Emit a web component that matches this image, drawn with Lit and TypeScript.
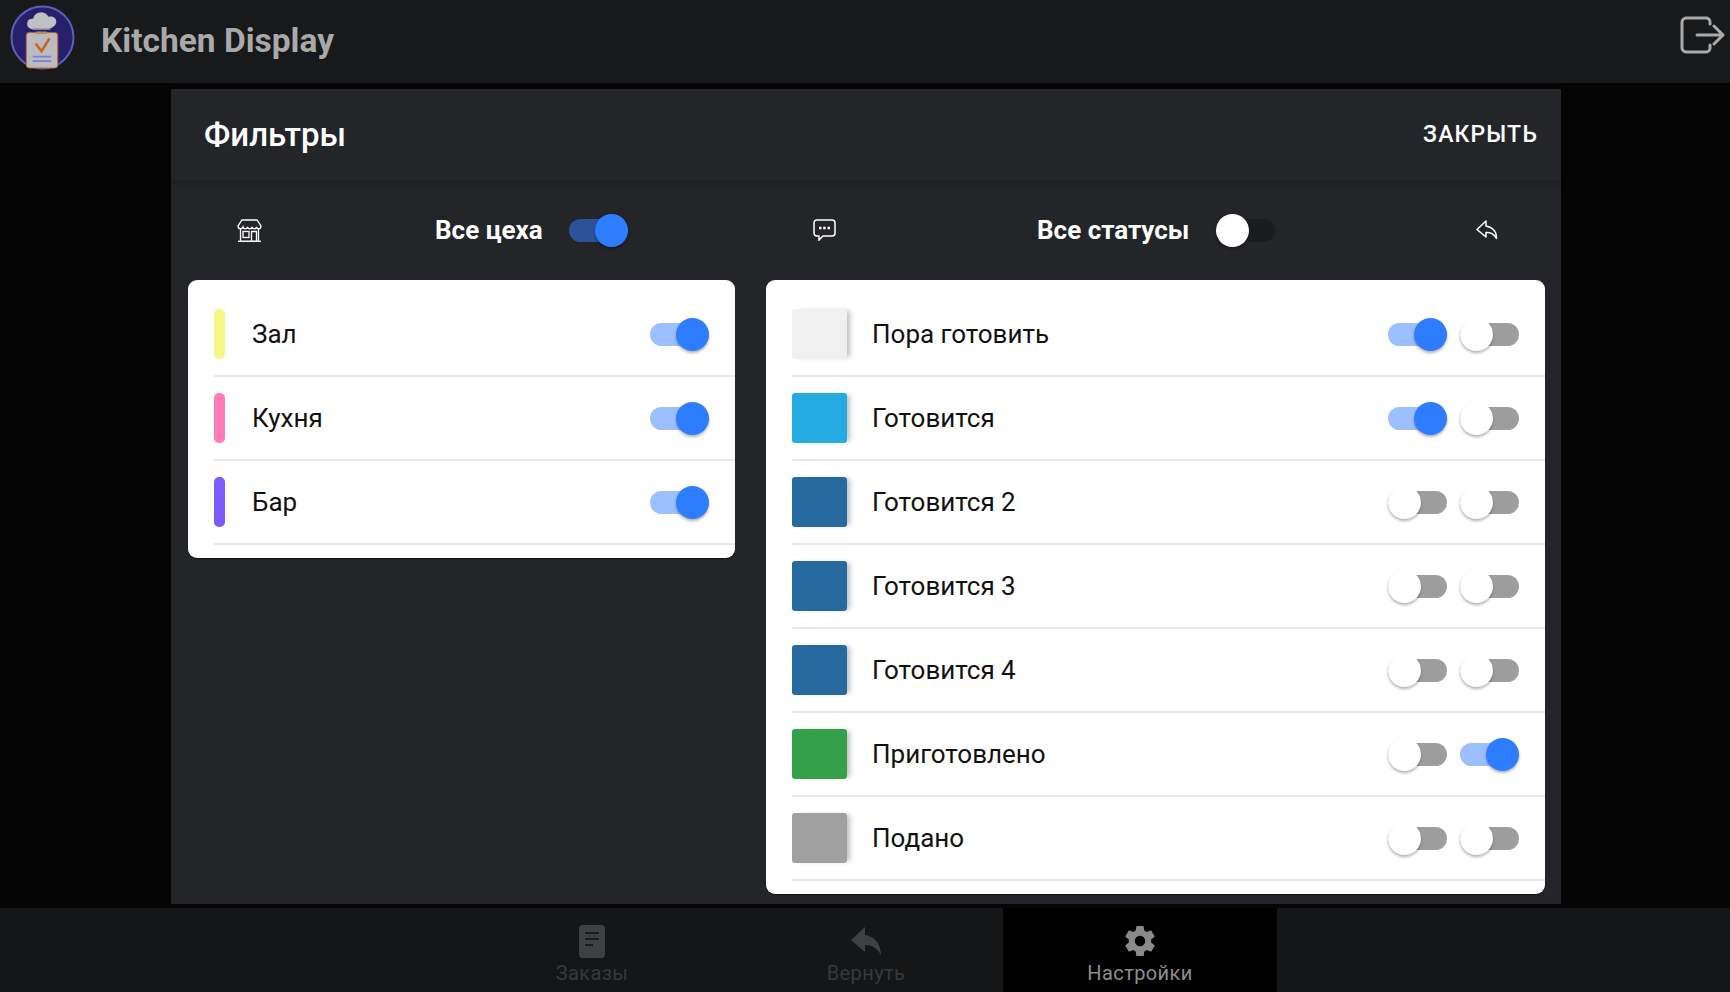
import { LitElement, html, css, svg } from 'lit';
import { customElement, property } from 'lit/decorators.js';
import { classMap } from 'lit/directives/class-map.js';

@customElement('filter-toggle')
export class FilterToggle extends LitElement {
  @property({ type: Boolean }) on = false;
  @property({ type: Boolean }) dark = false;

  static styles = css`
    :host {
      display: block;
      flex: none;
    }
    .switch {
      position: relative;
      width: 59px;
      height: 33px;
      display: flex;
      align-items: center;
    }
    .track {
      width: 100%;
      height: 23px;
      border-radius: 12px;
      background: #9e9e9e;
    }
    .knob {
      position: absolute;
      top: 0;
      left: 0;
      width: 33px;
      height: 33px;
      border-radius: 50%;
      background: #fff;
      box-shadow: 0 2px 3px rgba(0, 0, 0, 0.3);
    }
    .on .track {
      background: #9cbfff;
    }
    .on .knob {
      left: auto;
      right: 0;
      background: #2f7dff;
    }
    .dark .track {
      background: #1b1c1f;
    }
    .dark.on .track {
      background: #2e5299;
    }
  `;

  render() {
    return html`<div class=${classMap({ switch: true, on: this.on, dark: this.dark })}>
      <div class="track"></div>
      <div class="knob"></div>
    </div>`;
  }
}

const workshops = [
  { name: 'Зал', color: '#f4f786', on: true },
  { name: 'Кухня', color: '#ff7ab8', on: true },
  { name: 'Бар', color: '#7c5cff', on: true },
];

const statuses = [
  { name: 'Пора готовить', color: '#f0f0f0', a: true, b: false },
  { name: 'Готовится', color: '#25aae1', a: true, b: false },
  { name: 'Готовится 2', color: '#266a9f', a: false, b: false },
  { name: 'Готовится 3', color: '#266a9f', a: false, b: false },
  { name: 'Готовится 4', color: '#266a9f', a: false, b: false },
  { name: 'Приготовлено', color: '#34a04a', a: false, b: true },
  { name: 'Подано', color: '#a0a0a0', a: false, b: false },
];

const logo = svg`<svg class="logo" width="65" height="65" viewBox="0 0 66 66">
  <circle cx="33" cy="33" r="31.500" fill="#271f6b" stroke="#5a60b8" stroke-width="2"/>
  <path d="M24 25c-5-1-7-3-6.500-7 .5-3 3-4.500 6-4 .5-4 5-7 9.500-6.500 3 .3 5 2 6 4.500 4-1 8 1 8 5 0 4-4 6-7.500 7.500z" fill="#c0c0c4"/>
  <path d="M23.500 24.500h17.500" stroke="#8b8b94" stroke-width="1.500"/>
  <rect x="16.500" y="28" width="32" height="36" rx="3" fill="#bcbcc0" stroke="#b5652a" stroke-width="1"/>
  <rect x="26" y="27" width="12" height="2.500" rx="1.200" fill="#b58a66"/>
  <path d="M26 39l6 8 8-13" fill="none" stroke="#c8661f" stroke-width="2.600"/>
  <path d="M23 52.500h19M23 57h19" stroke="#7b7fd6" stroke-width="1.800"/>
</svg>`;

const logoutIcon = svg`<svg width="48" height="40" viewBox="0 0 48 40" fill="none" stroke="#aaaaaa" stroke-width="3" stroke-linecap="round" stroke-linejoin="round">
  <path d="M33 9V7c0-2.500-2-4-4-4H9C7 3 5 5 5 7v26c0 2 2 4 4 4h20c2 0 4-1.500 4-4v-3"/>
  <path d="M20 20h26M37 11l9 9-9 9"/>
</svg>`;

const storeIcon = svg`<svg width="25" height="23" viewBox="0 0 25 23" fill="none" stroke="#fff" stroke-width="1.300">
  <path d="M3.500 9.500V22.300h18V9.500"/>
  <path d="M1 22.300h23"/>
  <path d="M5 1h15l4 6c0 3.500-4 3.500-4.500 1-.5 2.500-4 2.500-4.500 0-.5 2.500-4 2.500-4.500 0-.5 2.500-4 2.500-4.500 0C5 10.500 1 10.500 1 7z"/>
  <rect x="6" y="12.500" width="6" height="6"/>
  <path d="M14.500 22V12.500h5V22"/>
</svg>`;

const chatIcon = svg`<svg width="23" height="22" viewBox="0 0 23 22" fill="none" stroke="#fff" stroke-width="1.500">
  <path d="M4 1h15c1.700 0 3 1.300 3 3v10c0 1.700-1.300 3-3 3h-9l-4 4v-4H4c-1.700 0-3-1.300-3-3V4c0-1.700 1.300-3 3-3z"/>
  <path d="M6 9h2.500M10.200 9h2.500M14.500 9H17" stroke-width="2.500"/>
</svg>`;

const backIcon = svg`<svg width="22" height="20" viewBox="0 0 22 20" fill="none" stroke="#fff" stroke-width="1.500" stroke-linejoin="round">
  <path d="M10 1L1 9.500l9 7.500v-4.500c4.500-.5 8 1 10.500 6 .5-6-3-11-10.500-12.500z"/>
</svg>`;

const docIcon = svg`<svg width="26" height="33" viewBox="0 0 26 33">
  <rect width="26" height="33" rx="4" fill="#3f4042"/>
  <path d="M6 8h14M6 14h14M6 20h8" stroke="#1b1c1e" stroke-width="2"/>
</svg>`;

const replyIcon = svg`<svg width="31" height="33" viewBox="0 0 31 33">
  <path d="M14 2L0 15l14 12v-7c7 0 12 3 16 10C30 20 24 11 14 10z" fill="#3f4042"/>
</svg>`;

const gearIcon = svg`<svg width="36" height="36" viewBox="0 0 24 24">
  <path fill="#8a8a8a" fill-rule="evenodd" d="M19.400 13c.04-.33.06-.66.06-1s-.02-.67-.06-1l2.100-1.650c.2-.15.25-.42.12-.64l-2-3.460c-.12-.22-.39-.3-.61-.22l-2.490 1a7.300 7.300 0 0 0-1.690-.98l-.38-2.650A.49.49 0 0 0 14 2h-4c-.25 0-.46.18-.49.42l-.38 2.650c-.61.25-1.170.59-1.690.98l-2.490-1c-.22-.08-.49 0-.61.22l-2 3.460c-.13.22-.07.49.12.64L4.560 11c-.04.33-.06.67-.06 1s.02.67.06 1l-2.100 1.650c-.2.15-.25.42-.12.64l2 3.460c.12.22.39.3.61.22l2.490-1c.52.4 1.080.73 1.690.98l.38 2.650c.03.24.24.42.49.42h4c.25 0 .46-.18.49-.42l.38-2.650c.61-.25 1.170-.59 1.690-.98l2.490 1c.22.08.49 0 .61-.22l2-3.460c.12-.22.07-.49-.12-.64zM12 15.500a3.500 3.500 0 1 1 0-7 3.500 3.500 0 0 1 0 7z"/>
</svg>`;

@customElement('app-root')
export class AppRoot extends LitElement {
  static styles = css`
    :host {
      display: block;
      font-family: Roboto, 'Liberation Sans', sans-serif;
    }
    * {
      box-sizing: border-box;
    }
    .page {
      height: 992px;
      display: flex;
      flex-direction: column;
      background: #050505;
      overflow: hidden;
    }
    .topbar {
      flex: none;
      height: 83px;
      display: flex;
      align-items: center;
      padding: 0 5px 8px 10px;
      background: #17191b;
    }
    .logo {
      flex: none;
      margin-top: 0;
    }
    .brand {
      margin-left: 26px;
      margin-top: 6px;
      font-size: 33.500px;
      font-weight: 700;
      color: #a9a9a9;
    }
    .logout {
      margin-left: auto;
      display: flex;
      margin-top: -6px;
    }
    .main {
      flex: 1;
      min-height: 0;
      padding: 6px 169px 4px 171px;
      display: flex;
    }
    .dialog {
      flex: 1;
      display: flex;
      flex-direction: column;
      background: #242529;
    }
    .dialog-head {
      flex: none;
      position: relative;
      height: 91px;
      display: flex;
      align-items: center;
      justify-content: space-between;
      padding: 0 23px 0 33px;
      box-shadow: 0 4px 8px rgba(0, 0, 0, 0.18);
    }
    .dialog-title {
      font-size: 33px;
      font-weight: 500;
      color: #fff;
    }
    .close {
      font-size: 23px;
      font-weight: 500;
      letter-spacing: 1.15px;
      color: #fff;
    }
    .columns {
      display: grid;
      grid-template-columns: 547px 779px;
      column-gap: 31px;
      padding-left: 17px;
    }
    .tools {
      height: 100px;
      display: flex;
      align-items: center;
      color: #fff;
      font-size: 26px;
      font-weight: 700;
    }
    .tools svg {
      display: block;
      flex: none;
    }
    .tools filter-toggle {
      margin-left: 26px;
    }
    .tools-left {
      padding-left: 49px;
    }
    .tools-left .label {
      margin-left: 173px;
    }
    .tools-right {
      padding: 0 47px 0 47px;
    }
    .tools-right .label {
      margin-left: 201px;
    }
    .tools-right filter-toggle {
      margin-left: 27px;
    }
    .tools-right .back {
      margin-left: auto;
    }
    .card {
      align-self: start;
      padding: 13px 0;
      border-radius: 9px;
      background: #fff;
      box-shadow: 0 1px 1px rgba(0, 0, 0, 0.5);
    }
    .row {
      height: 84px;
      margin-left: 26px;
      padding-right: 26px;
      display: flex;
      align-items: center;
      border-bottom: 2px solid #e8e8e8;
      font-size: 26px;
      color: #111;
    }
    .bar {
      flex: none;
      width: 11px;
      height: 50px;
      margin-right: 27px;
      border-radius: 5px;
    }
    .swatch {
      flex: none;
      width: 55px;
      height: 50px;
      margin-right: 25px;
      border-radius: 3px;
      box-shadow: 5px 0 5px -2px rgba(0, 0, 0, 0.25);
    }
    .name {
      flex: 1;
    }
    .row filter-toggle + filter-toggle {
      margin-left: 13px;
    }
    .nav {
      flex: none;
      height: 84px;
      display: flex;
      justify-content: center;
      background: #141618;
      padding-left: 2px;
    }
    .tab {
      width: 274px;
      padding-top: 17px;
      display: flex;
      flex-direction: column;
      align-items: center;
      font-size: 20px;
      letter-spacing: 0.4px;
      color: #37383a;
    }
    .tab svg {
      display: block;
    }
    .tab span {
      margin-top: 3px;
    }
    .tab.active {
      background: #000;
      color: #8e8e8e;
      padding-top: 15px;
    }
    .tab.active span {
      margin-top: 2px;
    }
  `;

  render() {
    return html`<div class="page">
      <header class="topbar">
        ${logo}
        <div class="brand">Kitchen Display</div>
        <div class="logout">${logoutIcon}</div>
      </header>
      <main class="main">
        <section class="dialog">
          <div class="dialog-head">
            <div class="dialog-title">Фильтры</div>
            <div class="close">ЗАКРЫТЬ</div>
          </div>
          <div class="columns">
            <div class="tools tools-left">
              ${storeIcon}
              <span class="label">Все цеха</span>
              <filter-toggle on dark></filter-toggle>
            </div>
            <div class="tools tools-right">
              ${chatIcon}
              <span class="label">Все статусы</span>
              <filter-toggle dark></filter-toggle>
              <span class="back">${backIcon}</span>
            </div>
            <div class="card">
              ${workshops.map(
                (w) => html`<div class="row">
                  <div class="bar" style="background:${w.color}"></div>
                  <div class="name">${w.name}</div>
                  <filter-toggle ?on=${w.on}></filter-toggle>
                </div>`
              )}
            </div>
            <div class="card">
              ${statuses.map(
                (s) => html`<div class="row">
                  <div class="swatch" style="background:${s.color}"></div>
                  <div class="name">${s.name}</div>
                  <filter-toggle ?on=${s.a}></filter-toggle>
                  <filter-toggle ?on=${s.b}></filter-toggle>
                </div>`
              )}
            </div>
          </div>
        </section>
      </main>
      <nav class="nav">
        <div class="tab">${docIcon}<span>Заказы</span></div>
        <div class="tab">${replyIcon}<span>Вернуть</span></div>
        <div class="tab active">${gearIcon}<span>Настройки</span></div>
      </nav>
    </div>`;
  }
}
